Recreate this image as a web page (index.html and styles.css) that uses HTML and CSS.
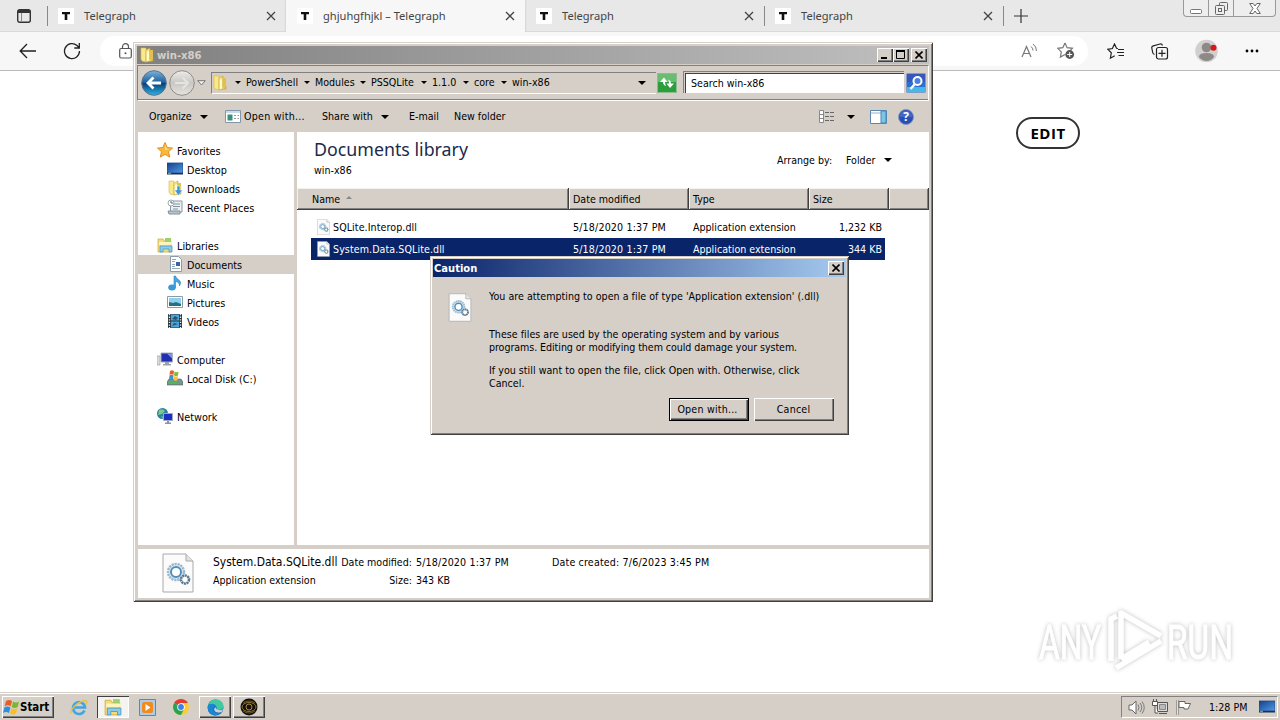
FILE: index.html
```html
<!DOCTYPE html>
<html lang="en">
<head>
    <meta charset="UTF-8">
    <title>ghjuhgfhjkl – Telegraph</title>
    <link rel="stylesheet" href="styles.css">
</head>
<body>
    <!-- shared icons -->
    <svg class="defs">
        <defs>
            <linearGradient id="gBlue" x1="0" y1="0" x2="0" y2="1"><stop offset="0" stop-color="#7cb4dc"/><stop offset=".48" stop-color="#1b5f9c"/><stop offset=".52" stop-color="#0b3f77"/><stop offset="1" stop-color="#29b5e8"/></linearGradient>
            <linearGradient id="gGray" x1="0" y1="0" x2="0" y2="1"><stop offset="0" stop-color="#ececea"/><stop offset=".5" stop-color="#c9c7c2"/><stop offset="1" stop-color="#e6e4df"/></linearGradient>
            <linearGradient id="gFolder" x1="0" y1="0" x2="1" y2="0"><stop offset="0" stop-color="#fdf3a8"/><stop offset="1" stop-color="#dcb63c"/></linearGradient>
            <linearGradient id="gScreen" x1="0" y1="0" x2="1" y2="1"><stop offset="0" stop-color="#163f8c"/><stop offset="1" stop-color="#4f9be6"/></linearGradient>
            <symbol id="folder" viewBox="0 0 16 16"><path d="M2 1h5v14l-4-1-1-2z" fill="#f9e98a" stroke="#d8b94c" stroke-width=".6"/><path d="M7 3l4-2v11l3-1v3l-7 1z" fill="url(#gFolder)" stroke="#c9a132" stroke-width=".6"/><path d="M11 3h3v9h-3z" fill="#e2bf4e"/><path d="M8 5l2-1v9l-2 1z" fill="#fffbd0"/></symbol>
            <symbol id="dll" viewBox="0 0 32 40"><path d="M1 1h23l7 7v31H1z" fill="#fbfbfb" stroke="#a9a9a9"/><path d="M24 1v7h7" fill="#e4e4e4" stroke="#a9a9a9"/><circle cx="14" cy="19" r="8" fill="#dcebf5" stroke="#9fb9cb" stroke-width="2.500" stroke-dasharray="2.200 .8"/><circle cx="14" cy="19" r="5" fill="#fff" stroke="#4f8fbd" stroke-width="2"/><circle cx="23" cy="26.500" r="4" fill="#fff" stroke="#58788e" stroke-width="2.600" stroke-dasharray="2 .6"/></symbol>
            <symbol id="library" viewBox="0 0 16 16"><path d="M1 2h5l1 2h7v11H1z" fill="#f5dc7a" stroke="#cfae48" stroke-width=".8"/><path d="M8 1h6v4H8z" fill="#9ed06e"/><path d="M2 5h13v3H2z" fill="#fdf4bd"/><path d="M3 9h12v6h-3v-3H6v3H3z" fill="#8ccbec" stroke="#4b9cc8" stroke-width=".8"/></symbol>
            <symbol id="screen" viewBox="0 0 16 16"><path d="M0 2h16v10H0z" fill="url(#gScreen)" stroke="#24477e" stroke-width=".8"/><path d="M0 12h16v1.500H0z" fill="#1c2f55"/><path d="M1 12.300h3" stroke="#5fd06a"/></symbol>
            <symbol id="winflag" viewBox="0 0 18 16"><path d="M4 2q3-2 6 0L8.700 7.300q-3-2-6 0z" fill="#ef5b25"/><path d="M11 2.600q3 2 6 0L15.700 8q-3 2-6 0z" fill="#7cb82f"/><path d="M2.400 8.500q3-2 6 0L7 14q-3-2-6 0z" fill="#2f8fdd"/><path d="M9.400 9.200q3 2 6 0L14 14.500q-3 2-6 0z" fill="#fdbf1d"/></symbol>
            <symbol id="tg" viewBox="0 0 16 16"><path d="M0 0h16v16H0z" fill="#fff"/><path d="M4 4h8v2.300H9.300V12H6.700V6.300H4z" fill="#111"/></symbol>
            <symbol id="x" viewBox="0 0 10 10"><path d="M1 1l8 8M9 1L1 9" fill="none" stroke="#444" stroke-width="1.300"/></symbol>
            <symbol id="winx" viewBox="0 0 8 8"><path d="M.5 .5l7 7M7.500 .5l-7 7" stroke="#000" stroke-width="1.600"/></symbol>
        </defs>
    </svg>

    <div class="browser">
        <div class="tabs">
            <div class="tab-actions">
                <svg width="14" height="14" viewBox="0 0 14 14"><rect x=".7" y=".7" width="12.600" height="12.600" rx="2" fill="none" stroke="#333" stroke-width="1.400"/><path d="M1 1h12v3H1z" fill="#333"/><path d="M4.500 4v9" stroke="#888"/></svg>
            </div>
            <div class="tab divided"><svg class="favicon"><use href="#tg"/></svg><span>Telegraph</span><svg class="close"><use href="#x"/></svg></div>
            <div class="tab active"><svg class="favicon"><use href="#tg"/></svg><span>ghjuhgfhjkl – Telegraph</span><svg class="close"><use href="#x"/></svg></div>
            <div class="tab"><svg class="favicon"><use href="#tg"/></svg><span>Telegraph</span><svg class="close"><use href="#x"/></svg></div>
            <div class="tab divided"><svg class="favicon"><use href="#tg"/></svg><span>Telegraph</span><svg class="close"><use href="#x"/></svg></div>
            <div class="new-tab"><svg width="14" height="14" viewBox="0 0 14 14"><path d="M7 0v14M0 7h14" stroke="#333" stroke-width="1.200"/></svg></div>
            <div class="caption-buttons">
                <span><svg width="12" height="5"><rect x=".5" y=".5" width="11" height="4" rx="1" fill="#fff" stroke="#777"/></svg></span>
                <span><svg width="13" height="13" fill="#eee" stroke="#666"><rect x="4.500" y=".5" width="8" height="8" rx="1"/><rect x=".5" y="3.500" width="9" height="9" rx="1"/><rect x="3.500" y="6.500" width="3" height="3"/></svg></span>
                <span><svg width="12" height="11" viewBox="0 0 12 11"><path d="M.7.500h3.500L6 3 7.800.500h3.500L8 5.500l3.300 5H7.800L6 8l-1.800 2.500H.7L4 5.500z" fill="#fff" stroke="#666"/></svg></span>
            </div>
        </div>

        <div class="toolbar">
            <svg class="back" width="18" height="16" viewBox="0 0 18 16"><path d="M17 8H1.500M8 1L1.200 8 8 15" fill="none" stroke="#222" stroke-width="1.300"/></svg>
            <svg class="reload" width="18" height="18" viewBox="0 0 18 18"><path d="M16.500 9A7.500 7.500 0 1 1 14 3.500l2 2M16.300 1v5h-5" fill="none" stroke="#222" stroke-width="1.300"/></svg>
            <div class="address">
                <svg width="13" height="16" viewBox="0 0 13 16"><rect x=".7" y="5.500" width="11.600" height="9.500" rx="1.500" fill="none" stroke="#555" stroke-width="1.200"/><path d="M3.500 5.500V3.700a3 3 0 0 1 6 0v1.800" fill="none" stroke="#555" stroke-width="1.200"/><circle cx="6.500" cy="10.300" r="1" fill="#555"/></svg>
                <svg class="read" width="17" height="16" viewBox="0 0 17 16"><path d="M1 14L5.500 3.500 10 14M2.700 10.500h5.600" fill="none" stroke="#777" stroke-width="1.200"/><path d="M10 3.500q2 1.500 2 4M12 1q3.500 2.500 3.500 7" fill="none" stroke="#777"/></svg>
                <svg class="fav" width="18" height="18" viewBox="0 0 18 18"><path d="M8 1l2.100 4.700 5.300.6-2 2M8 12.500l-4.600 2.600.9-5.200L.8 6.300l5-.6L8 1" fill="none" stroke="#777" stroke-width="1.200"/><circle cx="12.700" cy="12.500" r="4.400" fill="#555"/><path d="M12.700 10v5M10.200 12.500h5" stroke="#fff"/></svg>
            </div>
            <svg class="favorites" width="18" height="17" viewBox="0 0 18 17"><path d="M11 5.500L9.500 5.300 7.500 1 5.400 5.500.8 6.300l3.500 3.500-.9 5.400 4.300-2.400M11 6.500h6M10 9.500h7M11.500 12.500H17" fill="none" stroke="#222" stroke-width="1.200"/></svg>
            <svg class="collections" width="18" height="17" viewBox="0 0 18 17"><path d="M3.500 11.500Q2 11 1.700 9.500L.8 5q-.3-1.700 1.500-2.200L9 1q2-.3 2.500 1.500" fill="none" stroke="#222" stroke-width="1.200"/><rect x="5.500" y="4.500" width="11" height="11.500" rx="2" fill="#f7f7f7" stroke="#222" stroke-width="1.200"/><path d="M11 6.800v7M7.500 10.300h7" stroke="#222" stroke-width="1.200"/></svg>
            <svg class="profile" width="24" height="24" viewBox="0 0 24 24"><circle cx="11.500" cy="12" r="11.300" fill="#d2d0cf"/><circle cx="11.500" cy="8.500" r="4.800" fill="#8d8987"/><path d="M4 18q0-4 7.500-4t7.500 4q-3 4-7.500 4T4 18" fill="#8d8987"/><circle cx="18.500" cy="8.800" r="3" fill="#d9141b"/></svg>
            <svg class="more" width="14" height="4"><circle cx="2" cy="2" r="1.400"/><circle cx="7" cy="2" r="1.400"/><circle cx="12" cy="2" r="1.400"/></svg>
        </div>

        <div class="page">
            <button class="edit">EDIT</button>
        </div>
    </div>

    <div class="explorer">
        <div class="titlebar">
            <svg width="16" height="16"><use href="#folder"/></svg>
            <span>win-x86</span>
            <div class="bevel cap"><svg width="8" height="8"><path d="M0 7h6" stroke="#000" stroke-width="2"/></svg></div>
            <div class="bevel cap"><svg width="9" height="9"><path d="M.5 1h8v7.500h-8z" fill="none" stroke="#000"/><path d="M0 1h9" stroke="#000" stroke-width="2"/></svg></div>
            <div class="bevel cap last"><svg width="8" height="8"><use href="#winx"/></svg></div>
        </div>

        <div class="navbar">
            <svg class="round" width="26" height="26" viewBox="0 0 26 26"><circle cx="13" cy="13" r="12.300" fill="url(#gBlue)" stroke="#5e7286"/><path d="M20 13H8M12.500 7.500L7 13l5.500 5.500" fill="none" stroke="#fff" stroke-width="2.800"/></svg>
            <svg class="round" width="26" height="26" viewBox="0 0 26 26"><circle cx="13" cy="13" r="12.300" fill="url(#gGray)" stroke="#8c8c8c"/><path d="M6 13h11M13.500 7.500L19 13l-5.500 5.500" fill="none" stroke="#e4e4e2" stroke-width="2"/></svg>
            <svg class="history" width="9" height="6"><path d="M.7.700h7.600L4.500 5z" fill="#eee" stroke="#777"/></svg>
            <div class="crumbs">
                <svg width="16" height="16"><use href="#folder"/></svg>
                <span>PowerShell</span><span>Modules</span><span>PSSQLite</span><span>1.1.0</span><span>core</span><span>win-x86</span>
                <i class="arrow"></i>
            </div>
            <svg class="refresh" width="20" height="20" viewBox="0 0 20 20"><rect x=".5" y=".5" width="19" height="19" fill="#2d9e3c" stroke="#8dbb93"/><path d="M1 1h18v8H1z" fill="#68bd70"/><path d="M9 13q-3-1-3-4H3l4-4.500L10.500 9H8q0 2 1 4zM11 6.500q3 1 3 4h3L13 15l-3.500-4.500H12q0-2-1-4z" fill="#fff"/></svg>
            <div class="search">Search win-x86</div>
            <svg class="go" width="20" height="20" viewBox="0 0 20 20"><rect x=".5" y=".5" width="19" height="19" rx="1" fill="#2b6fd0" stroke="#7f9cc8"/><path d="M1 1h18v8H1z" fill="#3658bd"/><path d="M1 14h18v5H1z" fill="#46b8ea"/><circle cx="11.500" cy="8" r="4" fill="#4c7fdd" stroke="#fff" stroke-width="2"/><path d="M8.500 11.500L4.500 16" stroke="#fff" stroke-width="2.400"/></svg>
        </div>

        <div class="commands">
            <span class="organize">Organize</span><i class="arrow"></i>
            <svg class="app" width="16" height="13"><path d="M.5.500h15v12H.5z" fill="#fff" stroke="#8197a9"/><path d="M1 1h14v2H1z" fill="#c9dcec"/><path d="M2.500 4.500h5v6h-5z" fill="#3c8f7c"/><path d="M9 5.500h2M9 8.500h2M12.500 5.500H14M12.500 8.500H14" stroke="#999"/></svg>
            <span class="openwith">Open with...</span>
            <span class="share">Share with</span><i class="arrow"></i>
            <span class="email">E-mail</span>
            <span>New folder</span>
            <svg class="view" width="16" height="13"><path d="M.5.500h4v12h-4zM.5 4.500h4M.5 8.500h4" fill="#fff" stroke="#888"/><path d="M6 2.500h10M6 6.500h10M6 10.500h10" stroke="#666" stroke-dasharray="4 1"/></svg>
            <i class="arrow viewarrow"></i>
            <svg class="preview" width="17" height="14"><path d="M.5.500h16v13H.5z" fill="#fff" stroke="#5d87b0"/><path d="M1 3h10" stroke="#8eb3d0"/><path d="M11 1h5v12h-5z" fill="#7fc4e6" stroke="#4089b8"/></svg>
            <svg class="help" width="16" height="16" viewBox="0 0 16 16"><circle cx="8" cy="8" r="7.500" fill="#2850b4" stroke="#8494c0"/><path d="M1.500 8a6.500 6.500 0 0 1 13 0z" fill="#4268c0"/><text x="8" y="12" text-anchor="middle">?</text></svg>
        </div>

        <div class="content">
            <div class="navpane">
                <div class="item root"><svg><path d="M8 .5l2.200 5 5.300.6-4 3.600 1.200 5.400L8 12.300l-4.700 2.800 1.200-5.400L.5 6.100l5.300-.6z" fill="#f9b83c" stroke="#e58d22"/><path d="M8 2.500l1.500 4 3.500.500-5 1z" fill="#fde08a"/></svg>Favorites</div>
                <div class="item"><svg><use href="#screen"/></svg>Desktop</div>
                <div class="item"><svg><use href="#folder"/><path d="M10 6h3v4h2.500l-4 5.500-4-5.500H10z" fill="#3e96d8" stroke="#fff" stroke-width=".5"/></svg>Downloads</div>
                <div class="item"><svg><path d="M5 2h10v11H3.500V6z" fill="#edf1f3" stroke="#8997a0"/><path d="M6 5h7M6 7.500h7M6 10h5" stroke="#7f929e"/><path d="M1 12h12v3H2z" fill="#b8c4cc" stroke="#8290a0"/><circle cx="4" cy="4" r="3" fill="#fff" stroke="#9aa9b4"/><path d="M4 2v2h2" fill="none" stroke="#666"/></svg>Recent Places</div>
                <div class="item root gap"><svg><use href="#library"/></svg>Libraries</div>
                <div class="item selected"><svg><path d="M3.500.500h8l3 3v12h-11z" fill="#fff" stroke="#8a9bad"/><path d="M5 3.500h4M5 5.500h3M5 12.500h8M5 10.500h3M5 8.500h3" stroke="#98aaba"/><path d="M9 6h4v4H9z" fill="#3d63a3"/></svg>Documents</div>
                <div class="item"><svg><path d="M7 1h1.500q.5 2.500 3.500 4 3 2 .5 6 .3-4-4-4.500v6H7z" fill="#49a7e0" stroke="#2680c0" stroke-width=".6"/><ellipse cx="5" cy="12.500" rx="3.800" ry="3" fill="#3798dc"/></svg>Music</div>
                <div class="item"><svg><path d="M.5 2.500h15v11H.5z" fill="#fff" stroke="#8c9aa6"/><path d="M2 4h12v8H2z" fill="#8fd0ee"/><path d="M2 8l4 1 3-1 5 2v2H2z" fill="#24717f"/></svg>Pictures</div>
                <div class="item"><svg><path d="M1 1h14v14H1z" fill="#27333c"/><path d="M4 1.500h8v6H4zM4 8.500h8v6H4z" fill="#4aa5d8"/><path d="M2.500 1v14M13.500 1v14" stroke="#eee" stroke-width="1.400" stroke-dasharray="1.300 1.300"/><path d="M5 6l3-3 3 2-2 2zM5 13l2-3 4 1" fill="#2c526c"/></svg>Videos</div>
                <div class="item root gap"><svg><path d="M0 5h3v9H0z" fill="#d9dde0" stroke="#8e979e" stroke-width=".6"/><path d="M4 2h11.500v9H4z" fill="#2030b0" stroke="#a9aeb8"/><path d="M10 2.500h5v5z" fill="#7f95ec"/><path d="M8 11h4v2h2v1.500H6V13h2z" fill="#9aa2ac"/></svg>Computer</div>
                <div class="item"><svg><path d="M2 9h12l2 3v3H0v-3z" fill="#77928f" stroke="#4e6765" stroke-width=".6"/><path d="M1 13h9" stroke="#3cc557" stroke-width="1.500"/><path d="M3 1q2-1.500 4 0L6.500 5q-2-1.500-4 0z" fill="#ef5b25"/><path d="M7.500 1.500q2 1.500 4 0L11 5.500q-2 1.500-4 0z" fill="#84b93b"/><path d="M2.500 5.500q2-1.500 4 0L6 9.500q-2-1.500-4 0z" fill="#3a8fd8"/><path d="M7 6q2 1.500 4 0L10.500 10q-2 1.500-4 0z" fill="#fdc22f"/></svg>Local Disk (C:)</div>
                <div class="item root gap"><svg><circle cx="5.500" cy="5.500" r="5.500" fill="#2c7f9d"/><path d="M2 2q4-2 6 1L5 6 1 7zM4 8l3 1-1 2z" fill="#78c98e"/><path d="M6.500 5.500h9v7h-9z" fill="#1d2fc0" stroke="#9ea8c8"/><path d="M10 13h2v1.500h2V16H8v-1.500h2z" fill="#8994a4"/></svg>Network</div>
            </div>

            <div class="files">
                <div class="library-head">
                    <div>
                        <div class="library-name">Documents library</div>
                        <div>win-x86</div>
                    </div>
                    <div class="arrange"><span>Arrange by:</span><span>Folder</span><i class="arrow"></i></div>
                </div>
                <div class="columns">
                    <div>Name<i class="sort"></i></div><div>Date modified</div><div>Type</div><div>Size</div><div></div>
                </div>
                <div class="row"><div><svg width="13" height="16"><use href="#dll"/></svg>SQLite.Interop.dll</div><div class="date">5/18/2020 1:37 PM</div><div>Application extension</div><div>1,232 KB</div></div>
                <div class="row chosen"><div><svg width="13" height="16"><use href="#dll"/></svg>System.Data.SQLite.dll</div><div class="date">5/18/2020 1:37 PM</div><div>Application extension</div><div>344 KB</div></div>
            </div>
        </div>

        <div class="details">
            <svg width="32" height="40"><use href="#dll"/></svg>
            <div class="d-name"><span class="big">System.Data.SQLite.dll</span><span>Application extension</span></div>
            <div class="d-label"><span>Date modified:</span><span>Size:</span></div>
            <div class="d-value"><span class="date">5/18/2020 1:37 PM</span><span>343 KB</span></div>
            <div class="d-created"><span class="date">Date created: 7/6/2023 3:45 PM</span></div>
        </div>
    </div>

    <div class="dialog">
        <div class="dialog-title">Caution<div class="bevel cap"><svg width="8" height="8"><use href="#winx"/></svg></div></div>
        <div class="dialog-body">
            <svg width="24" height="29"><use href="#dll"/></svg>
            <div class="message">
                <p class="first">You are attempting to open a file of type 'Application extension' (.dll)</p>
                <p>These files are used by the operating system and by various<br><span class="tight">programs. Editing or modifying them could damage your system.</span></p>
                <p>If you still want to open the file, click Open with. Otherwise, click<br>Cancel.</p>
            </div>
        </div>
        <div class="dialog-buttons">
            <button class="btn default">Open with...</button>
            <button class="btn">Cancel</button>
        </div>
    </div>

    <svg class="watermark" width="247" height="90" viewBox="0 0 247 90">
        <g fill="#fff" stroke="#fff">
            <text x="6" y="54" textLength="62" lengthAdjust="spacingAndGlyphs">ANY</text>
            <text x="134" y="54" textLength="66" lengthAdjust="spacingAndGlyphs">RUN</text>
        </g>
        <path d="M78 56V14l6-3M88 54V8l40 23M83 63l45-27M88 54l28-17" fill="none" stroke="#fff" stroke-width="5.500" stroke-linejoin="round"/>
    </svg>

    <div class="taskbar">
        <div class="start bevel"><svg width="18" height="16"><use href="#winflag"/></svg>Start</div>
        <div class="task"><svg width="18" height="17" viewBox="0 0 18 17"><path d="M14.500 11.500A6 6 0 1 1 15 8.500H4.500" fill="none" stroke="#43a5df" stroke-width="2.600"/><path d="M1 14.500C0 10 9 2 15 1.500q3 0 1 4" fill="none" stroke="#eac04a" stroke-width="1.400"/></svg></div>
        <div class="task pressed"><svg width="18" height="18" viewBox="0 0 16 16"><use href="#library" width="16" height="16"/></svg></div>
        <div class="task"><svg width="17" height="17" viewBox="0 0 17 17"><path d="M.5.500h16v16H.5z" fill="#a9cdec" stroke="#4a8bc8"/><rect x="3" y="3" width="11" height="11" rx="2" fill="#f28a1e"/><path d="M6.500 5l5 3.500-5 3.500z" fill="#fff"/></svg></div>
        <div class="task"><svg width="16" height="16" viewBox="0 0 16 16"><path d="M8 8L1.100 4A8 8 0 0 1 14.900 4z" fill="#e33b2e"/><path d="M8 8V4h6.900A8 8 0 0 1 8 16z" fill="#fccc31"/><path d="M8 8l3 2-3 6A8 8 0 0 1 1.100 4z" fill="#2ba24c"/><circle cx="8" cy="8" r="3.800" fill="#fff"/><circle cx="8" cy="8" r="2.900" fill="#3f7fe8"/></svg></div>
        <div class="task bevel"><svg width="17" height="17" viewBox="0 0 17 17"><circle cx="8.500" cy="8.500" r="8" fill="#1271c6"/><path d="M1 6Q4 0 9 .5q7 .5 7.500 6.500 0 4-5 4-3 0-1.500-2Q9 4 1 6z" fill="#42c9a0"/><path d="M1 6q6-3 8 1-4 1-2.500 4.500T14 14q-5 4-9.500 1.500T1 6z" fill="#1b86d4"/><path d="M9.500 7.500q-1.500 3 2 3.500t5-1L14.500 13Q8 15 7 10z" fill="#d6d2cb"/></svg></div>
        <div class="task bevel"><svg width="18" height="18" viewBox="0 0 18 18"><circle cx="9" cy="9" r="8.500" fill="#15110a"/><ellipse cx="9" cy="9" rx="7" ry="4.500" fill="none" stroke="#8f7331"/><circle cx="9" cy="9" r="3" fill="none" stroke="#a98a3d"/><path d="M3 5q6-4 12 0M3 13q6 4 12 0" fill="none" stroke="#6d5827"/></svg></div>
        <div class="tray">
            <svg width="17" height="15" viewBox="0 0 17 15"><path d="M1 5h3l4-4v13l-4-4H1z" fill="#fff" stroke="#666"/><path d="M10 4.500q2 3 0 6M12 3q3.500 4.500 0 9M14 1.500q4.500 6 0 12" fill="none" stroke="#777"/></svg>
            <svg width="17" height="16" viewBox="0 0 17 16"><path d="M5.500 3.500h10v9h-10zM7 14.500h8" fill="#ddd" stroke="#555"/><path d="M7.500 5.500h6v5h-6z" fill="#bbb" stroke="#888"/><path d="M.5 2.500h5v4h-5zM1.500 0v2M4.500 0v2M3 7v7h3" fill="#fff" stroke="#555"/></svg>
            <svg width="16" height="15" viewBox="0 0 16 15"><path d="M1.500 0v15" stroke="#666" stroke-width="2"/><path d="M1.500 0v15" stroke="#fff" stroke-width=".8"/><path d="M3 1.500h6v2h5.500L12 9H8V7.500H3z" fill="#fff" stroke="#666"/></svg>
            <span>1:28 PM</span>
            <svg width="16" height="16"><use href="#screen"/></svg>
        </div>
    </div>
</body>
</html>
```
FILE: styles.css
```css
* {
    box-sizing: border-box;
}
body {
    margin: 0;
    width: 1280px;
    height: 720px;
    overflow: hidden;
    position: relative;
    display: flex;
    flex-direction: column;
    background: #fff;
    color: #000;
    font: 10.6px/13px "DejaVu Sans Condensed", "DejaVu Sans", sans-serif;
    font-stretch: condensed;
    white-space: nowrap;
}
svg {
    display: block;
    flex: none;
}
.defs {
    position: absolute;
    width: 0;
    height: 0;
}
.bevel {
    background: #d5cfc8;
    box-shadow: inset 1px 1px #fff, inset -1px -1px #404040, inset -2px -2px #808080;
}
.arrow {
    flex: none;
    border: 4px solid transparent;
    border-top-color: #000;
    border-bottom: 0;
}

/* browser */
.browser {
    flex: 1;
    display: flex;
    flex-direction: column;
}
.tabs {
    display: flex;
    height: 32px;
    background: #e8e8e8;
    border-bottom: 1px solid #dadada;
    font: 11.1px/16px "Noto Sans", sans-serif;
    color: #444;
}
.tab-actions {
    width: 47px;
    padding: 9px 0 0 17px;
}
.tab {
    display: flex;
    align-items: center;
    width: 239px;
    padding: 0 10px 0 11px;
}
.tab.divided {
    background: linear-gradient(#888, #888) 0 6px / 1px 20px no-repeat;
}
.tab.active {
    height: 32px;
    background: #f7f7f7;
    box-shadow: 0 0 2px #bbb;
    clip-path: inset(0 -3px 0 -3px);
}
.tab span {
    flex: 1;
    margin-left: 10px;
}
.favicon {
    width: 16px;
    height: 16px;
}
.close {
    width: 10px;
    height: 10px;
}
.new-tab {
    width: 180px;
    padding: 9px 0 0 11px;
    background: linear-gradient(#888, #888) 0 6px / 1px 20px no-repeat;
}
.caption-buttons {
    display: flex;
    width: 93px;
    height: 17px;
    border: 1px solid #999;
    border-top: 0;
    border-radius: 0 0 4px 4px;
    background: #eee;
}
.caption-buttons span {
    width: 25px;
    display: flex;
    align-items: center;
    justify-content: center;
    border-right: 1px solid #999;
}
.caption-buttons span:first-child {
    padding-top: 6px;
}
.caption-buttons span:last-child {
    flex: 1;
    border: 0;
}
.toolbar {
    display: flex;
    align-items: center;
    height: 39px;
    background: #f7f7f7;
    border-bottom: 1px solid #bbb;
}
.back { margin-left: 19px; }
.reload { margin-left: 26px; }
.address {
    display: flex;
    align-items: center;
    width: 988px;
    height: 30px;
    margin-left: 19px;
    padding: 0 13px 0 19px;
    border-radius: 15px;
    background: #fff;
}
.read { margin-left: auto; }
.fav { margin-left: 19px; }
.favorites { margin-left: 19px; }
.collections { margin-left: 26px; }
.profile { margin-left: 26px; }
.more { margin-left: 26px; }
.page {
    flex: 1;
    padding: 46px 0 0 1016px;
}
.edit {
    display: block;
    width: 64px;
    height: 32px;
    padding: 0 0 1px;
    border: 2px solid #333;
    border-radius: 16px;
    background: #fff;
    font: 700 15px "Open Sans", sans-serif;
    letter-spacing: 0.5px;
    color: #000;
}

/* explorer window */
.explorer {
    position: absolute;
    left: 133px;
    top: 42px;
    width: 800px;
    height: 560px;
    padding: 4px;
    display: flex;
    flex-direction: column;
    background: #d5cfc8;
    box-shadow: inset 1px 1px #d5cfc8, inset -1px -1px #404040, inset 2px 2px #fff, inset -2px -2px #808080;
}
.titlebar {
    display: flex;
    align-items: center;
    height: 18px;
    padding: 0 2px;
    background: linear-gradient(90deg, #808080, #c0c0c0);
    color: #d5cfc8;
    font-weight: bold;
    font-size: 11.2px;
}
.titlebar span {
    flex: 1;
    margin-left: 2px;
}
.cap {
    width: 16px;
    height: 14px;
    display: flex;
    align-items: center;
    justify-content: center;
    padding: 0 1px 1px 0;
}
.cap.last {
    margin-left: 2px;
}
.navbar {
    display: flex;
    align-items: center;
    height: 36px;
    margin-top: 1px;
    padding: 0 2px 0 3px;
    border: 1px solid #808080;
    border-bottom-color: #fff;
    border-right-color: #fff;
    box-shadow: inset 0 -1px #808080;
}
.round { margin-right: 2px; }
.history { margin: 0 5px 0 0; }
.crumbs {
    display: flex;
    align-items: center;
    width: 445px;
    height: 22px;
    border: 1px solid #808080;
    border-right: 0;
    border-bottom-color: #fff;
}
.crumbs span {
    display: flex;
    align-items: center;
    width: 69px;
    padding-bottom: 1px;
}
.crumbs span::before {
    content: "";
    margin: 0 5px 0 6px;
    border: 3px solid transparent;
    border-top-color: #000;
    border-bottom: 0;
}
.crumbs span:nth-of-type(1) { margin-left: 1px; }
.crumbs span:nth-of-type(2) { width: 56px; }
.crumbs span:nth-of-type(3) { width: 61px; }
.crumbs span:nth-of-type(4) { width: 42px; }
.crumbs span:nth-of-type(5) { width: 38px; }
.crumbs .arrow {
    margin: 0 10px 0 auto;
}
.refresh { margin-left: 1px; }
.search {
    flex: 1;
    height: 22px;
    margin: 0 1px 0 7px;
    padding: 4px 6px 0;
    background: #fff;
    border: 1px solid #d5cfc8;
    box-shadow: inset 1px 1px #404040, -1px -1px #808080;
}
.commands {
    display: flex;
    align-items: center;
    height: 31px;
    padding-left: 12px;
}
.organize { width: 51px; }
.app { margin-left: 17px; }
.openwith { width: 78px; margin-left: 3px; letter-spacing: 0.25px; }
.share { width: 59px; }
.email { width: 45px; margin-left: 20px; }
.view { margin-left: auto; }
.viewarrow { margin-left: 12px; }
.preview { margin-left: 15px; }
.help { margin: 0 15px 0 11px; }
.help text {
    font: bold 12px "Open Sans", sans-serif;
    fill: #fff;
}
.content {
    display: flex;
    height: 413px;
    margin-left: 1px;
    background: #fff;
}
.navpane {
    width: 159px;
    padding-top: 9px;
    border-right: 3px solid #d5cfc8;
    font-size: 10.75px;
}
.item {
    display: flex;
    align-items: center;
    height: 19px;
    padding: 1px 0 0 29px;
}
.item svg {
    width: 16px;
    height: 16px;
    margin: -2px 4px 0 0;
}
.item.root { padding-left: 19px; }
.item.gap { margin-top: 19px; }
.item.selected { background: #d5cfc8; }
.files {
    flex: 1;
}
.library-head {
    display: flex;
    justify-content: space-between;
    height: 56px;
    padding: 6px 37px 0 17px;
}
.library-name {
    margin-bottom: 3px;
    font: 17.8px/23px "Noto Sans", sans-serif;
    color: #1b2a4c;
}
.arrange {
    display: flex;
    align-items: center;
    height: 14px;
    margin-top: 15px;
}
.arrange span:first-child { width: 69px; }
.arrange span:nth-child(2) { width: 38px; }
.columns {
    display: grid;
    grid-template-columns: 272px 120px 120px 80px 40px;
    height: 22px;
    line-height: 22px;
    margin-bottom: 6px;
}
.columns div {
    padding-left: 4px;
    background: #d5cfc8;
    box-shadow: inset -1px -1px #404040, inset 1px 1px #f4f2ee, inset -2px -2px #808080;
}
.columns div:first-child { padding-left: 15px; }
.sort {
    display: inline-block;
    margin: 0 0 4px 6px;
    border: 3px solid transparent;
    border-bottom-color: #888;
    border-top: 0;
}
.row {
    display: grid;
    grid-template-columns: 258px 120px 120px 73px;
    align-items: center;
    width: 574px;
    height: 22px;
    margin-left: 14px;
}
.row div:first-child {
    display: flex;
    align-items: center;
    padding-left: 6px;
    letter-spacing: 0.08px;
}
.row div { padding-left: 4px; }
.row div:last-child {
    padding-left: 0;
    text-align: right;
}
.row svg { margin-right: 3px; }
.date { letter-spacing: 0.16px; }
.chosen {
    background: #0a246a;
    color: #fff;
}
.details {
    flex: 1;
    display: flex;
    margin: 4px 0 0 1px;
    padding: 4px 0 0 24px;
    background: #fff;
}
.details div {
    display: flex;
    flex-direction: column;
    gap: 5px;
    padding-top: 3px;
}
.details .d-name { width: 125px; margin-left: 19px; }
.details .d-label { width: 74px; text-align: right; }
.details .d-value { margin-left: 4px; width: 136px; }
.big { font-size: 12px; }

/* caution dialog */
.dialog {
    position: absolute;
    left: 430px;
    top: 256px;
    width: 419px;
    height: 179px;
    padding: 3px;
    background: #d5cfc8;
    box-shadow: inset 1px 1px #d5cfc8, inset -1px -1px #404040, inset 2px 2px #fff, inset -2px -2px #808080;
}
.dialog-title {
    display: flex;
    align-items: center;
    justify-content: space-between;
    height: 18px;
    padding: 0 2px 0 1px;
    background: linear-gradient(90deg, #0a246a, #a6caf0);
    color: #fff;
    font-weight: bold;
    font-size: 11.1px;
}
.dialog-body {
    display: flex;
    height: 121px;
    padding: 13px 0 0 15px;
}
.dialog-body svg { margin-top: 3px; }
.message { margin-left: 17px; }
.message p { margin: 0 0 10px; letter-spacing: 0.02px; }
.message .first { margin-bottom: 25px; }
.tight { letter-spacing: -0.06px; }
.dialog-buttons {
    display: flex;
    gap: 5px;
    margin-left: 236px;
}
.btn {
    width: 80px;
    height: 23px;
    padding: 0 1px 1px 0;
    border: 0;
    background: #d5cfc8;
    box-shadow: inset 1px 1px #fff, inset -1px -1px #404040, inset -2px -2px #808080;
    font: inherit;
    letter-spacing: 0.2px;
}
.btn.default {
    padding-right: 3px;
    border: 1px solid #000;
}

.watermark {
    position: absolute;
    left: 1033px;
    top: 605px;
    font: 49px Roboto, sans-serif;
    filter: drop-shadow(0 0 2px rgba(0, 0, 0, 0.25));
}

/* taskbar */
.taskbar {
    display: flex;
    align-items: center;
    height: 28px;
    padding: 1px 2px 0 2px;
    background: #d5cfc8;
    border-top: 1px solid #d5cfc8;
    box-shadow: inset 0 1px #fff;
}
.start {
    display: flex;
    align-items: center;
    width: 52px;
    height: 22px;
    margin-right: 9px;
    font-weight: bold;
    font-size: 11.4px;
}
.task {
    display: flex;
    align-items: center;
    justify-content: center;
    width: 32px;
    height: 22px;
    margin-right: 2px;
}
.pressed {
    background: #f4f3f0;
    box-shadow: inset 1px 1px #404040, inset -1px -1px #fff;
}
.tray {
    display: flex;
    align-items: center;
    gap: 7px;
    width: 157px;
    height: 22px;
    margin-left: auto;
    padding-left: 6px;
    border: 1px solid #808080;
    border-bottom-color: #fff;
    border-right-color: #fff;
}
.tray span {
    width: 43px;
    margin-left: 10px;
}
```
